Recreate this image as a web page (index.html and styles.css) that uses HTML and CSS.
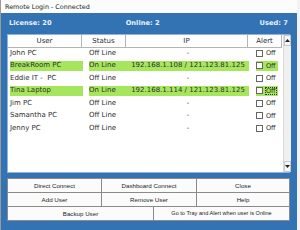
FILE: index.html
```html
<!DOCTYPE html>
<html>
<head>
<meta charset="utf-8">
<link rel="stylesheet" href="styles.css">
</head>
<body>
<div class="window">
  <div class="titlebar">Remote Login - Connected</div>
  <div class="panel">
    <div class="info">
      <span>License: 20</span>
      <span class="online">Online: 2</span>
      <span class="used">Used: 7</span>
    </div>
    <div class="listbox">
      <div class="grid">
        <div class="head">
          <div class="hc c-user">User</div>
          <div class="hc c-status">Status</div>
          <div class="hc c-ip">IP</div>
          <div class="hc c-alert">Alert</div>
        </div>
        <div class="row"><div class="c-user">John PC</div><div class="c-status">Off Line</div><div class="c-ip">-</div><div class="c-alert"><span class="cb"></span><span class="off">Off</span></div></div>
        <div class="row on"><div class="c-user">BreakRoom PC</div><div class="c-status">On Line</div><div class="c-ip">192.168.1.108 / 121.123.81.125</div><div class="c-alert"><span class="cb"></span><span class="off">Off</span></div></div>
        <div class="row"><div class="c-user">Eddie IT -&nbsp; PC</div><div class="c-status">Off Line</div><div class="c-ip">-</div><div class="c-alert"><span class="cb"></span><span class="off">Off</span></div></div>
        <div class="row on"><div class="c-user">Tina Laptop</div><div class="c-status">On Line</div><div class="c-ip">192.168.1.114 / 121.123.81.125</div><div class="c-alert"><span class="cb"></span><span class="off focus">Off</span></div></div>
        <div class="row"><div class="c-user">Jim PC</div><div class="c-status">Off Line</div><div class="c-ip">-</div><div class="c-alert"><span class="cb"></span><span class="off">Off</span></div></div>
        <div class="row"><div class="c-user">Samantha PC</div><div class="c-status">Off Line</div><div class="c-ip">-</div><div class="c-alert"><span class="cb"></span><span class="off">Off</span></div></div>
        <div class="row"><div class="c-user">Jenny PC</div><div class="c-status">Off Line</div><div class="c-ip">-</div><div class="c-alert"><span class="cb"></span><span class="off">Off</span></div></div>
      </div>
      <div class="scrollbar">
        <div class="arrow"><svg width="5" height="3" viewBox="0 0 5 3"><path d="M0 3 L2.5 0 L5 3 Z" fill="#222"/></svg></div>
        <div class="track"></div>
        <div class="arrow"><svg width="5" height="3" viewBox="0 0 5 3"><path d="M0 0 L2.5 3 L5 0 Z" fill="#222"/></svg></div>
      </div>
    </div>
    <div class="buttons">
      <div class="btn b1">Direct Connect</div>
      <div class="btn b2">Dashboard Connect</div>
      <div class="btn b3">Close</div>
      <div class="btn b1">Add User</div>
      <div class="btn b2">Remove User</div>
      <div class="btn b3">Help</div>
      <div class="btn wide-l">Backup User</div>
      <div class="btn wide-r">Go to Tray and Alert when user is Online</div>
    </div>
  </div>
</div>
</body>
</html>
```
FILE: styles.css
```css
html, body {
  margin: 0;
  padding: 0;
  background: #f3f3f3;
}
.window {
  width: 297px;
  height: 230px;
  border-left: 1px solid #9a9a9a;
  box-sizing: border-box;
  display: flex;
  flex-direction: column;
  background: #fff;
}
.titlebar {
  height: 13px;
  line-height: 14px;
  padding-left: 4px;
  font-family: "DejaVu Sans", sans-serif;
  font-size: 6.4px;
  color: #222;
  background: #fcfcfc;
}
.panel {
  flex: 1;
  background: #3372b3;
  padding: 0 7px 0 6px;
  display: flex;
  flex-direction: column;
}
.info {
  height: 20px;
  display: flex;
  align-items: center;
  font-family: "DejaVu Sans", sans-serif;
  font-weight: bold;
  font-size: 6.7px;
  color: #e8f1fb;
  padding: 0 2px 1px 2px;
}
.info .online { margin-left: 74px; }
.info .used { margin-left: auto; }
.listbox {
  height: 139px;
  background: #fff;
  display: flex;
  border: 1px solid #8eb5de;
  box-sizing: border-box;
  font-family: "DejaVu Sans", sans-serif;
  font-size: 7px;
  color: #2e2e2e;
}
.grid {
  flex: 1;
  display: flex;
  flex-direction: column;
}
.head, .row {
  display: grid;
  grid-template-columns: 74px 44px 122px 34px;
}
.head {
  height: 12px;
}
.hc {
  border: 1px solid #b4b4b4;
  border-left: none;
  border-top: none;
  text-align: center;
  line-height: 12px;
  background: #fff;
}
.row {
  height: 12.5px;
  line-height: 12.5px;
  margin-left: 1px;
}
.row.on > div {
  background: #a6e65c;
  background-clip: content-box;
}
.row > div {
  padding: 1.5px 0;
  line-height: 9.5px;
  white-space: nowrap;
}
.row .c-user { padding-left: 1px; }
.row .c-status { padding-left: 6px; }
.row .c-ip { text-align: center; }
.row .c-alert {
  display: flex;
  align-items: center;
  padding-left: 7px;
}
.row.on .c-alert { padding-right: 5px; }
.cb {
  width: 5px;
  height: 5px;
  border: 1px solid #666;
  background: #fff;
  margin-right: 2px;
}
.off {
  font-size: 6.5px;
  line-height: 8px;
  padding: 0 1px;
}
.off.focus { outline: 1px dotted #333; outline-offset: -1px; }
.scrollbar {
  width: 8px;
  display: flex;
  flex-direction: column;
  border-left: 1px solid #dadada;
  background: #f0f0f0;
}
.arrow {
  height: 9px;
  display: flex;
  align-items: center;
  justify-content: center;
  background: #f6f6f6;
  border: 1px solid #c8c8c8;
}
.track { flex: 1; }
.buttons {
  margin-top: 5px;
  display: grid;
  grid-template-columns: 94px 52px 43px 1fr;
  grid-auto-rows: 14px;
  border-top: 1px solid #8a8a8a;
  border-left: 1px solid #8a8a8a;
  width: 283px;
  box-sizing: border-box;
}
.btn {
  border-right: 1px solid #8a8a8a;
  border-bottom: 1px solid #8a8a8a;
  background: #fbfbfb;
  text-align: center;
  font-family: "Liberation Sans", sans-serif;
  font-size: 6.2px;
  line-height: 13px;
  color: #222;
  white-space: nowrap;
}
.btn.b1 { grid-column: 1; }
.btn.b2 { grid-column: 2 / 4; }
.btn.b3 { grid-column: 4; }
.btn.wide-l { grid-column: 1 / 3; }
.btn.wide-r { grid-column: 3 / 5; font-size: 5.6px; }
```
